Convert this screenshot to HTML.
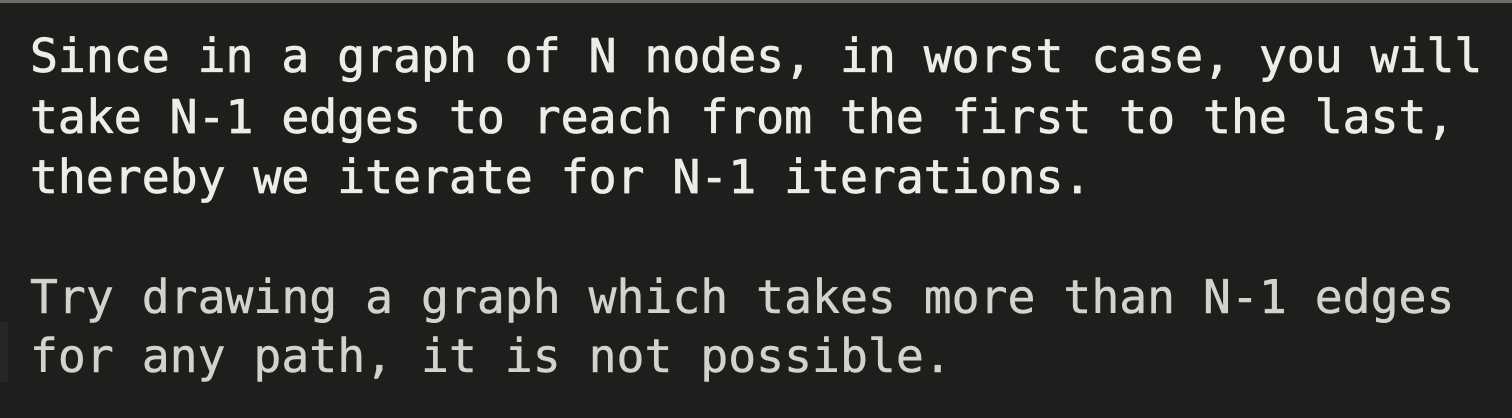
<!DOCTYPE html>
<html><head><style>
html,body{margin:0;padding:0}
body{width:1512px;height:418px;background:#1e1e1c;position:relative;overflow:hidden}
.top{position:absolute;left:0;top:0;width:1512px;height:3px;background:#6e6e6a}
.l{position:absolute;left:30px;font-family:"DejaVu Sans Mono","Liberation Mono",monospace;font-size:46.4px;line-height:60px;color:#ececE8;white-space:pre;letter-spacing:0;-webkit-text-stroke:0.8px #ececE8}
.g{color:#d2d2ce;-webkit-text-stroke:0.5px #d2d2ce}
.bar{position:absolute;left:0;top:322px;width:8px;height:60px;background:#262624}
</style></head><body>
<div class="top"></div>
<div class="bar"></div>
<div class="l" style="top:26px">Since in a graph of N nodes, in worst case, you will</div>
<div class="l" style="top:87px">take N-1 edges to reach from the first to the last,</div>
<div class="l" style="top:147px">thereby we iterate for N-1 iterations.</div>
<div class="l g" style="top:267px">Try drawing a graph which takes more than N-1 edges</div>
<div class="l g" style="top:326px">for any path, it is not possible.</div>
</body></html>
